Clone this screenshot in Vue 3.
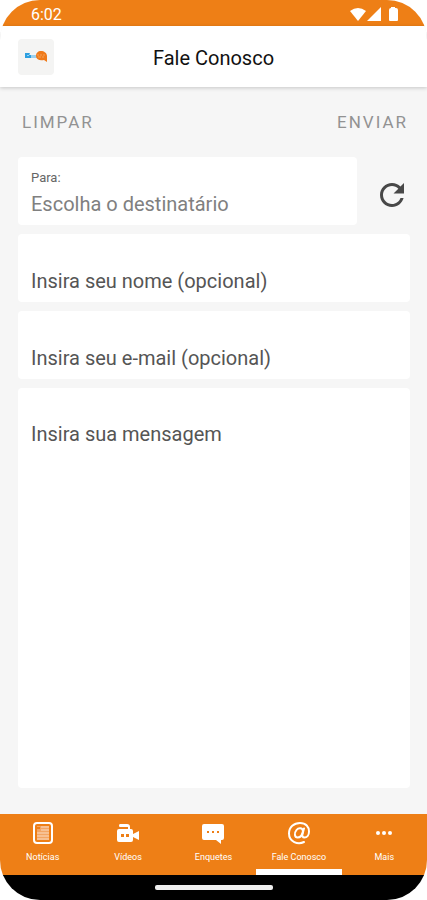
<script setup>
import { ref } from 'vue'

const recipient = ref('')
const name = ref('')
const email = ref('')
const message = ref('')
const active = ref('contato')

const tabs = [
  { id: 'noticias', label: 'Notícias' },
  { id: 'videos', label: 'Vídeos' },
  { id: 'enquetes', label: 'Enquetes' },
  { id: 'contato', label: 'Fale Conosco' },
  { id: 'mais', label: 'Mais' },
]

function clearForm() {
  recipient.value = ''
  name.value = ''
  email.value = ''
  message.value = ''
}
</script>

<template>
  <div class="screen">
    <div class="status">
      <span class="time">6:02</span>
      <svg class="status-icons" width="50" height="16" viewBox="0 0 50 16" aria-hidden="true">
        <path d="M0 4Q8-2 16 4L8 14Z" />
        <path d="M31 0V14H17Z" />
        <path d="M41 0H45V1H46Q48 1 48 3V13Q48 14 47 14H40Q39 14 39 13V3Q39 1 41 1Z" />
      </svg>
    </div>

    <header class="topbar">
      <a class="logo" href="#" aria-label="Início">
        <svg width="24" height="14" viewBox="0 0 24 14">
          <path d="M1 3H6L5 5H9V8H1Z" fill="#2d9fe0" />
          <path d="M3 5L4 6L6 4" fill="none" stroke="#9ad3f2" stroke-width="1" />
          <path d="M7 5H13V8H7Z" fill="#9dd0ec" />
          <path d="M17 1C20 1 23 3 23 6V12L20 10C15 11 12 9 12 6C12 3 14 1 17 1Z" fill="#ef7a1a" />
          <path d="M13 5H15M16 5H18M19 5H21M14 7H17M18 7H20" fill="none" stroke="#f4a058" stroke-width="1" />
        </svg>
      </a>
      <h1>Fale Conosco</h1>
    </header>

    <form class="form" @submit.prevent>
      <div class="actions">
        <button type="button" @click="clearForm">LIMPAR</button>
        <button type="submit">ENVIAR</button>
      </div>
      <div class="fields">
        <div class="row">
          <div class="card select-card">
            <label for="recipient">Para:</label>
            <select id="recipient" v-model="recipient">
              <option value="">Escolha o destinatário</option>
            </select>
          </div>
          <button class="refresh" type="button" aria-label="Atualizar">
            <svg width="36" height="36" viewBox="0 0 24 24" aria-hidden="true">
              <path d="M17.65 6.35C16.2 4.9 14.21 4 12 4c-4.42 0-7.99 3.58-7.99 8s3.57 8 7.99 8c3.73 0 6.84-2.55 7.73-6h-2.08c-.82 2.33-3.04 4-5.65 4-3.31 0-6-2.69-6-6s2.69-6 6-6c1.66 0 3.14.69 4.22 1.78L13 11h7V4l-2.35 2.35z" />
            </svg>
          </button>
        </div>
        <input v-model="name" class="card" type="text" aria-label="Nome" placeholder="Insira seu nome (opcional)">
        <input v-model="email" class="card" type="email" aria-label="E-mail" placeholder="Insira seu e-mail (opcional)">
        <textarea v-model="message" class="card" aria-label="Mensagem" placeholder="Insira sua mensagem"></textarea>
      </div>
    </form>

    <nav class="tabs">
      <a
        v-for="tab in tabs"
        :key="tab.id"
        href="#"
        class="tab"
        :class="{ active: active === tab.id }"
        @click.prevent="active = tab.id"
      >
        <svg width="24" height="24" viewBox="0 0 24 24" aria-hidden="true">
          <g v-if="tab.id === 'noticias'" fill="none" stroke="#fff">
            <rect x="3" y="2" width="18" height="20" rx="3" stroke-width="2" />
            <path d="M6 5H18V19H6Z" fill="#f3a565" stroke="none" />
            <path d="M6 6H9V8H6Z" fill="#ee7f16" stroke="none" />
            <path d="M10 6H18M10 9H18M6 12H18M6 15H18M6 18H18" stroke="#fbdcc2" />
          </g>
          <g v-else-if="tab.id === 'videos'">
            <path d="M4 3H11Q14 3 14 6V8H15Q17 8 17 10V13L23 10V19L17 16V19Q17 21 15 21H3Q1 21 1 19V10Q1 8 3 8H12V6H4Q3 6 3 4.500Q3 3 4 3Z" fill="#fff" />
            <path d="M5 13H8V16H5ZM10 13H13V16H10Z" fill="#ee7f16" />
          </g>
          <g v-else-if="tab.id === 'enquetes'">
            <path d="M3 3H21Q23 3 23 5V17Q23 19 21 19H20V23L15 19H3Q1 19 1 17V5Q1 3 3 3Z" fill="#fff" />
            <path d="M6 10H8V12H6ZM11 10H13V12H11ZM16 10H18V12H16Z" fill="#ee7f16" />
          </g>
          <g v-else-if="tab.id === 'contato'" fill="none" stroke="#fff" stroke-width="2" stroke-linecap="round">
            <path d="M17 21C11 24 2 21 2 12.500C2 6 7 2 13 2C19 2 22 6 22 10.500C22 14 20 16.500 17.500 16.500C15.500 16.500 15 15 15.500 13L17 7.500" />
            <path d="M16 10C15.500 6.500 11.500 6.500 9.500 9C7 12 7.500 16.500 10.500 16.500C13.500 16.500 15.500 13.500 16 10Z" />
          </g>
          <g v-else fill="#fff">
            <circle cx="6" cy="12" r="2" />
            <circle cx="12" cy="12" r="2" />
            <circle cx="18" cy="12" r="2" />
          </g>
        </svg>
        <span>{{ tab.label }}</span>
      </a>
    </nav>
    <div class="gesture"><span></span></div>
  </div>
</template>

<style>
body {
  background: #fff;
}
</style>

<style scoped>
.screen {
  display: flex;
  flex-direction: column;
  min-height: 100vh;
  overflow: hidden;
  border-radius: 40px;
  background: #f6f6f6;
  font-family: Roboto, sans-serif;
}
.status {
  display: flex;
  align-items: center;
  justify-content: space-between;
  height: 26px;
  padding: 4px 27px 0 31px;
  box-sizing: border-box;
  background: #ee7f16;
  color: #fff;
}
.time {
  font-size: 16px;
  line-height: 22px;
}
.status-icons {
  fill: #fff;
}
.topbar {
  display: grid;
  grid-template-columns: 36px 1fr 36px;
  align-items: center;
  height: 61px;
  padding: 0 18px;
  box-sizing: border-box;
  background: #fff;
  box-shadow: 0 1px 4px rgba(0, 0, 0, 0.2);
}
.logo {
  display: flex;
  align-items: center;
  justify-content: center;
  height: 36px;
  border-radius: 4px;
  background: #f4f4f3;
}
h1 {
  margin: 0;
  padding-top: 2px;
  color: #111;
  font-size: 20px;
  font-weight: 400;
  line-height: 24px;
  text-align: center;
}
.form {
  display: flex;
  flex: 1;
  flex-direction: column;
}
button {
  padding: 0;
  border: 0;
  background: none;
  font-family: inherit;
}
.actions {
  display: flex;
  align-items: center;
  justify-content: space-between;
  height: 70px;
  padding: 0 19px 0 22px;
}
.actions button {
  color: #929292;
  font-size: 17px;
  line-height: 24px;
  letter-spacing: 2px;
}
.fields {
  display: flex;
  flex: 1;
  flex-direction: column;
  gap: 9px;
  padding: 0 17px 26px 18px;
}
.row {
  display: flex;
}
.card {
  box-sizing: border-box;
  width: 100%;
  height: 68px;
  margin: 0;
  border: 0;
  border-radius: 4px;
  background: #fff;
  color: #555;
  font-family: inherit;
  font-size: 20px;
  line-height: 24px;
}
input.card {
  padding: 25px 13px 0;
}
textarea.card {
  flex: 1;
  padding: 34px 13px 13px;
  resize: none;
}
.card::placeholder {
  color: #555;
  opacity: 1;
}
.select-card {
  display: flex;
  flex: 1;
  flex-direction: column;
  gap: 6px;
  padding: 13px 13px 0;
}
.select-card label {
  color: #666;
  font-size: 13px;
  line-height: 16px;
}
select {
  padding: 0;
  border: 0;
  appearance: none;
  background: none;
  color: #808080;
  font-family: inherit;
  font-size: 20px;
  line-height: 24px;
}
.refresh {
  display: flex;
  align-items: center;
  justify-content: flex-end;
  width: 53px;
  padding-top: 8px;
}
.refresh svg {
  fill: #484848;
}
.tabs {
  display: grid;
  grid-template-columns: repeat(5, 1fr);
  background: #ee7f16;
}
.tab {
  display: flex;
  flex-direction: column;
  align-items: center;
  gap: 6px;
  height: 61px;
  padding-top: 7px;
  box-sizing: border-box;
  border-bottom: 6px solid transparent;
  color: #fff;
  font-size: 9px;
  line-height: 12px;
  text-decoration: none;
}
.tab.active {
  border-bottom-color: #fff;
}
.gesture {
  display: flex;
  align-items: center;
  justify-content: center;
  height: 25px;
  background: #000;
}
.gesture span {
  width: 118px;
  height: 5px;
  border-radius: 2px;
  background: #eee;
}
</style>
